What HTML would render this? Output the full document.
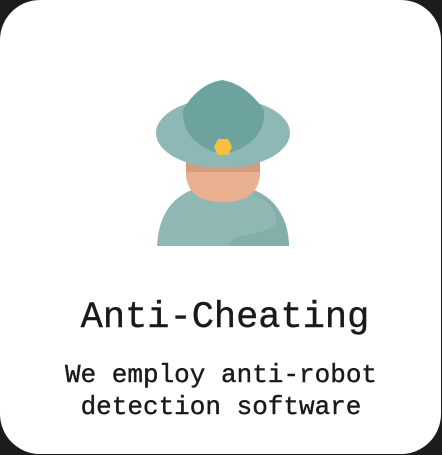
<!DOCTYPE html>
<html><head><style>
html,body{margin:0;padding:0;background:#1c1c1e;width:442px;height:455px;overflow:hidden}
.card{position:absolute;left:0;top:0;width:441px;height:454px;background:#fff;border-radius:40px}
.t{position:absolute;left:0;width:442px;text-align:center;font-family:"Liberation Mono",monospace;color:#1a1a1a;white-space:nowrap;-webkit-text-stroke:0.4px #1a1a1a}
</style></head><body>
<div class="card"></div>
<svg style="position:absolute;left:0;top:0" width="442" height="455">
<path d="M157 246 Q160 186 223 184 Q286 186 289 246 Z" fill="#8fb8b4"/>
<path d="M245 190 Q272 200 276 216 Q282 230 240 236 Q228 240 230 246 L289 246 Q288 200 245 190Z" fill="#84aeaa"/>
<path d="M186 160 L260 160 L260 175 Q258 202 223 202 Q188 202 186 175 Z" fill="#e8b08e"/>
<rect x="186" y="160" width="74" height="12" fill="#d39c7d"/>
<ellipse cx="223" cy="133" rx="67" ry="35" fill="#8eb8b5"/>
<path d="M183 110 Q198 84 222 80 Q246 84 264 110 Q266 140 232 152 L214 152 Q182 140 183 110Z" fill="#6da39e"/>
<polygon points="218,139 228,139 232,147 228,155 218,155 214,147" fill="#fbbf3f"/>
</svg>
<div class="t" style="top:298px;left:4px;font-size:37px;line-height:40px">Anti-Cheating</div>
<div class="t" style="top:359px;font-size:26px;line-height:32px">We employ anti-robot<br>detection software</div>
</body></html>
